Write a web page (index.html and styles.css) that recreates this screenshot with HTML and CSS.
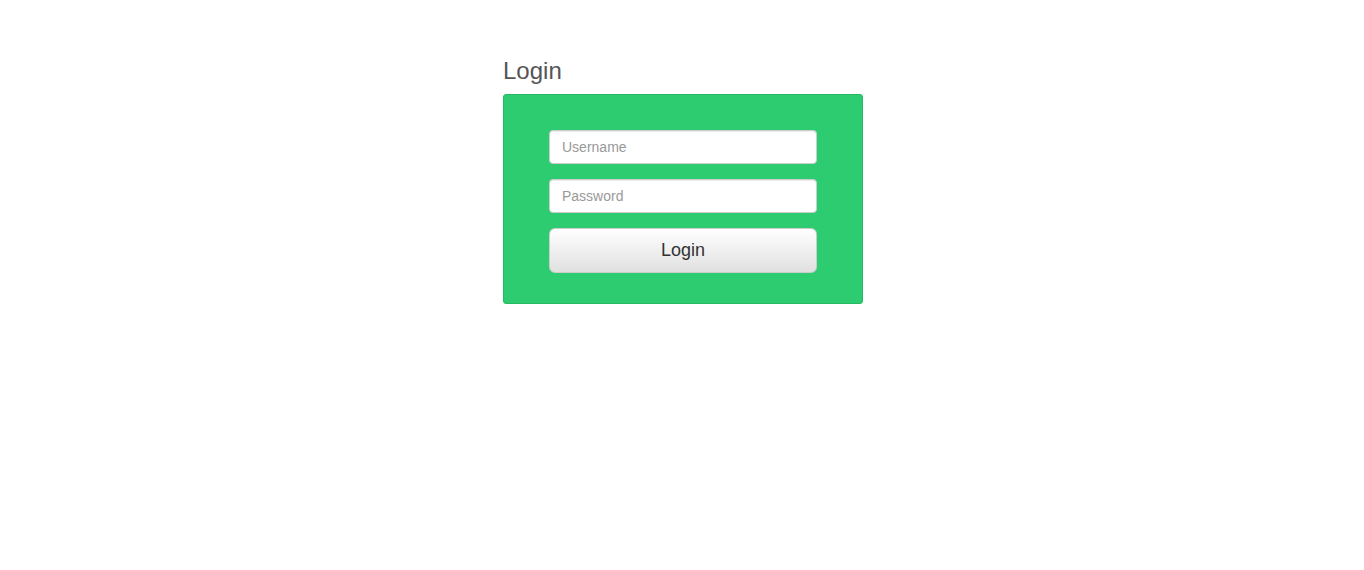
FILE: index.html
```html
<!DOCTYPE html>
<html lang="en">
<head>
    <meta charset="UTF-8">
    <meta name="viewport" content="width=device-width, initial-scale=1.0">
    <title>Login</title>
    <link rel="stylesheet" href="styles.css">
</head>
<body>
    <div class="wrapper">
        <h2 class="title">Login</h2>
        <form class="login-box">
            <input class="field" type="text" placeholder="Username">
            <input class="field" type="password" placeholder="Password">
            <button class="login-button" type="button">Login</button>
        </form>
    </div>
</body>
</html>
```

FILE: styles.css
```css
body {
    font-family: "Liberation Sans", Arial, sans-serif;
    margin: 0;
    background: #fff;
}
.wrapper {
    width: 360px;
    margin-left: calc(50% - 179px);
    padding-top: 57px;
}
.title {
    font-size: 24px;
    font-weight: normal;
    color: #555;
    margin: 0 0 9px 0;
    line-height: 28px;
}
.login-box {
    background: #2ecc71;
    border: 1px solid #27b862;
    border-radius: 3px;
    padding: 35px 45px 30px 45px;
    display: flex;
    flex-direction: column;
    gap: 15px;
    margin: 0;
}
.field {
    box-sizing: border-box;
    height: 34px;
    width: 100%;
    border: 1px solid #ccc;
    border-radius: 4px;
    padding: 0 12px;
    font-family: "Liberation Sans", Arial, sans-serif;
    font-size: 14px;
    color: #555;
    background: #fff;
    box-shadow: inset 0 1px 1px rgba(0,0,0,0.075);
}
.field::placeholder {
    color: #999;
}
.login-button {
    box-sizing: border-box;
    height: 45px;
    width: 100%;
    border: 1px solid #ccc;
    border-radius: 6px;
    background: linear-gradient(to bottom, #fff 0%, #e0e0e0 100%);
    font-family: "Liberation Sans", Arial, sans-serif;
    font-size: 18px;
    color: #333;
    cursor: pointer;
}
```
